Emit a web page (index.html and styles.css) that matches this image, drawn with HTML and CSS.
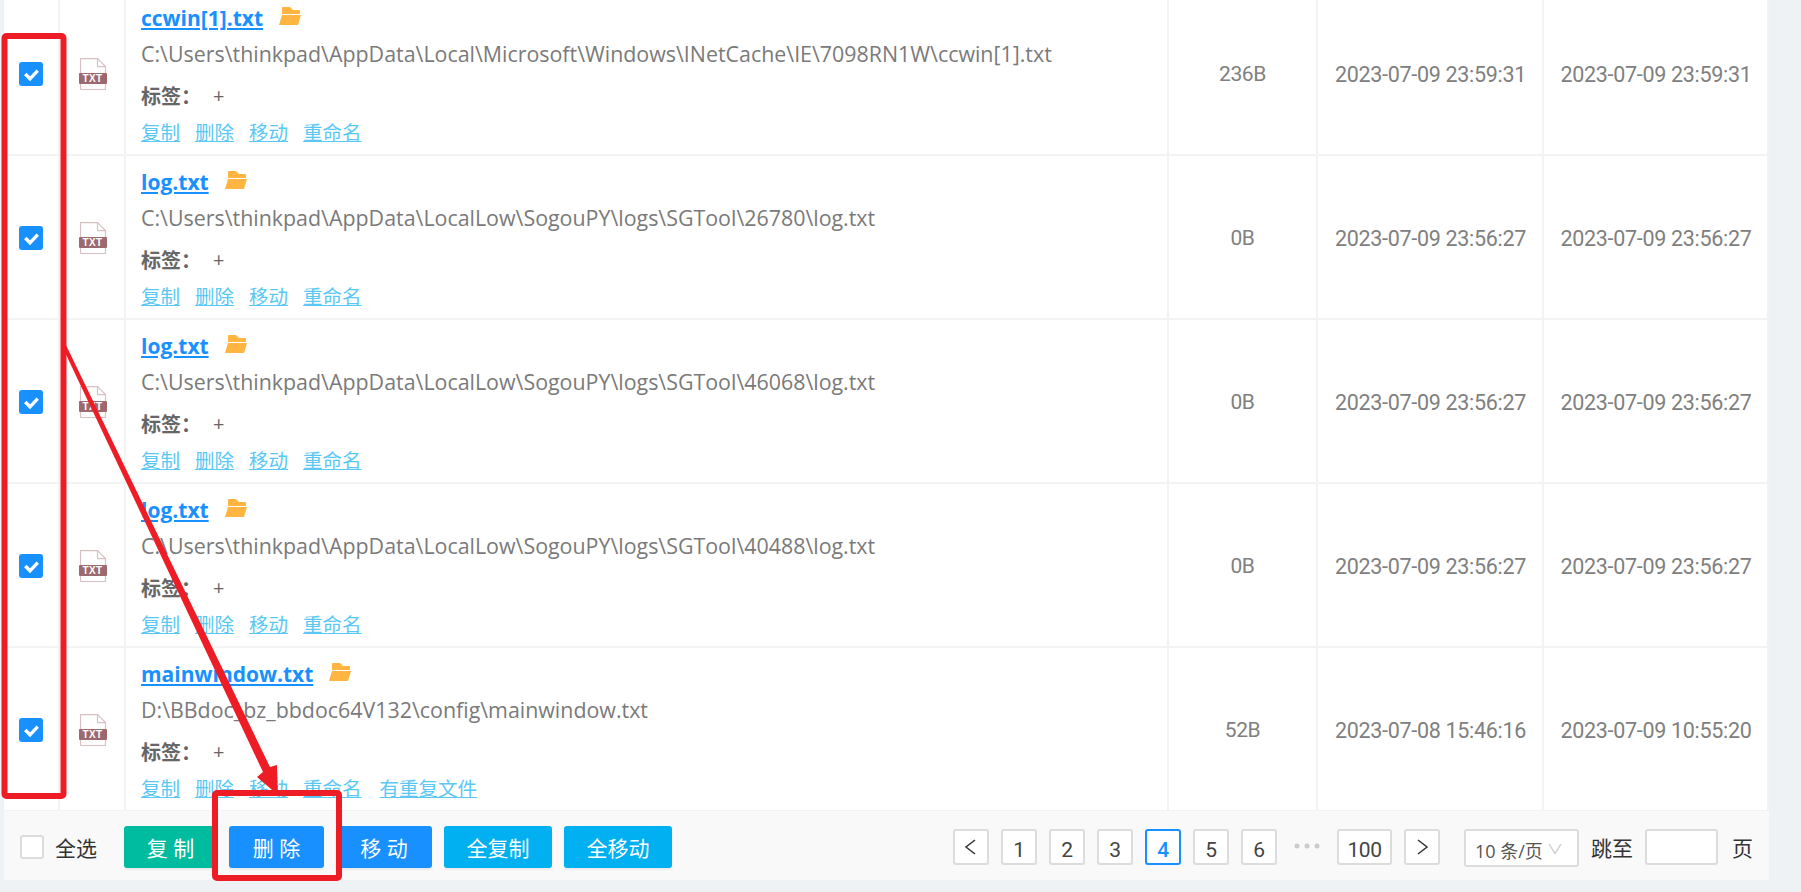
FILE: index.html
```html
<!DOCTYPE html>
<html lang="zh">
<head>
<meta charset="utf-8">
<title>文件列表</title>
<link rel="stylesheet" href="styles.css">
</head>
<body>
<svg width="0" height="0" class="defs">
  <symbol id="txt" viewBox="0 0 28 32">
    <path d="M1.500.6h17l8 8v22a1 1 0 0 1-1 1h-23a1 1 0 0 1-1-1z" fill="#fff" stroke="#d8bfc1" stroke-width="1.200"/>
    <path d="M18.500.6v8h8" fill="none" stroke="#d8bfc1" stroke-width="1.200"/>
    <rect x="0" y="15" width="28" height="11" rx="1" fill="#9c6a6e"/>
  </symbol>
  <symbol id="folder" viewBox="0 0 22 18">
    <path d="M3 1a1 1 0 0 1 1-1h7l3 3h6a1 1 0 0 1 1 1v3H3z" fill="#ffb53f"/>
    <path d="M3 8H22L19 18H0z" fill="#ffb53f"/>
  </symbol>
</svg>
<main class="panel">
  <div class="rows">
    <div class="row first">
      <div class="cell check"><span class="box on"><svg viewBox="0 0 24 24"><path d="M6.300 12L11 16.800l7.700-8.100"/></svg></span></div>
      <div class="cell icon"><span class="doc"><svg><use href="#txt"/></svg><b>TXT</b></span></div>
      <div class="cell main">
        <div class="title"><a href="#">ccwin[1].txt</a><svg class="folder"><use href="#folder"/></svg></div>
        <div class="path">C:\Users\thinkpad\AppData\Local\Microsoft\Windows\INetCache\IE\7098RN1W\ccwin[1].txt</div>
        <div class="tags"><strong>标签：</strong><span>+</span></div>
        <div class="links"><a href="#">复制</a><a href="#">删除</a><a href="#">移动</a><a href="#">重命名</a></div>
      </div>
      <div class="cell size">236B</div>
      <div class="cell date">2023-07-09 23:59:31</div>
      <div class="cell date">2023-07-09 23:59:31</div>
    </div>
    <div class="row">
      <div class="cell check"><span class="box on"><svg viewBox="0 0 24 24"><path d="M6.300 12L11 16.800l7.700-8.100"/></svg></span></div>
      <div class="cell icon"><span class="doc"><svg><use href="#txt"/></svg><b>TXT</b></span></div>
      <div class="cell main">
        <div class="title"><a href="#">log.txt</a><svg class="folder"><use href="#folder"/></svg></div>
        <div class="path">C:\Users\thinkpad\AppData\LocalLow\SogouPY\logs\SGTool\26780\log.txt</div>
        <div class="tags"><strong>标签：</strong><span>+</span></div>
        <div class="links"><a href="#">复制</a><a href="#">删除</a><a href="#">移动</a><a href="#">重命名</a></div>
      </div>
      <div class="cell size">0B</div>
      <div class="cell date">2023-07-09 23:56:27</div>
      <div class="cell date">2023-07-09 23:56:27</div>
    </div>
    <div class="row">
      <div class="cell check"><span class="box on"><svg viewBox="0 0 24 24"><path d="M6.300 12L11 16.800l7.700-8.100"/></svg></span></div>
      <div class="cell icon"><span class="doc"><svg><use href="#txt"/></svg><b>TXT</b></span></div>
      <div class="cell main">
        <div class="title"><a href="#">log.txt</a><svg class="folder"><use href="#folder"/></svg></div>
        <div class="path">C:\Users\thinkpad\AppData\LocalLow\SogouPY\logs\SGTool\46068\log.txt</div>
        <div class="tags"><strong>标签：</strong><span>+</span></div>
        <div class="links"><a href="#">复制</a><a href="#">删除</a><a href="#">移动</a><a href="#">重命名</a></div>
      </div>
      <div class="cell size">0B</div>
      <div class="cell date">2023-07-09 23:56:27</div>
      <div class="cell date">2023-07-09 23:56:27</div>
    </div>
    <div class="row">
      <div class="cell check"><span class="box on"><svg viewBox="0 0 24 24"><path d="M6.300 12L11 16.800l7.700-8.100"/></svg></span></div>
      <div class="cell icon"><span class="doc"><svg><use href="#txt"/></svg><b>TXT</b></span></div>
      <div class="cell main">
        <div class="title"><a href="#">log.txt</a><svg class="folder"><use href="#folder"/></svg></div>
        <div class="path">C:\Users\thinkpad\AppData\LocalLow\SogouPY\logs\SGTool\40488\log.txt</div>
        <div class="tags"><strong>标签：</strong><span>+</span></div>
        <div class="links"><a href="#">复制</a><a href="#">删除</a><a href="#">移动</a><a href="#">重命名</a></div>
      </div>
      <div class="cell size">0B</div>
      <div class="cell date">2023-07-09 23:56:27</div>
      <div class="cell date">2023-07-09 23:56:27</div>
    </div>
    <div class="row">
      <div class="cell check"><span class="box on"><svg viewBox="0 0 24 24"><path d="M6.300 12L11 16.800l7.700-8.100"/></svg></span></div>
      <div class="cell icon"><span class="doc"><svg><use href="#txt"/></svg><b>TXT</b></span></div>
      <div class="cell main">
        <div class="title"><a href="#">mainwindow.txt</a><svg class="folder"><use href="#folder"/></svg></div>
        <div class="path">D:\BBdoc_bz_bbdoc64V132\config\mainwindow.txt</div>
        <div class="tags"><strong>标签：</strong><span>+</span></div>
        <div class="links"><a href="#">复制</a><a href="#">删除</a><a href="#">移动</a><a href="#">重命名</a><a class="dup" href="#">有重复文件</a></div>
      </div>
      <div class="cell size">52B</div>
      <div class="cell date">2023-07-08 15:46:16</div>
      <div class="cell date">2023-07-09 10:55:20</div>
    </div>
  </div>
  <footer class="bar">
    <label class="all"><span class="box"></span>全选</label>
    <div class="actions">
      <button class="btn green">复 制</button>
      <button class="btn blue del">删 除</button>
      <button class="btn blue">移 动</button>
      <button class="btn cyan">全复制</button>
      <button class="btn cyan">全移动</button>
    </div>
    <nav class="pager">
      <span class="pg arrow"><svg viewBox="0 0 18 18"><path d="M13 2L4 9l9 7"/></svg></span>
      <span class="pg">1</span>
      <span class="pg">2</span>
      <span class="pg">3</span>
      <span class="pg now">4</span>
      <span class="pg">5</span>
      <span class="pg">6</span>
      <svg class="dots" viewBox="0 0 48 10"><circle cx="8" cy="5" r="2.500"/><circle cx="18" cy="5" r="2.500"/><circle cx="28" cy="5" r="2.500"/></svg>
      <span class="pg wide">100</span>
      <span class="pg arrow"><svg viewBox="0 0 18 18"><path d="M5 2l9 7-9 7"/></svg></span>
      <span class="size-sel">10 条/页<svg viewBox="0 0 14 12"><path d="M1 1l6 9.500L13 1"/></svg></span>
      <span class="jump">跳至</span>
      <span class="jump-in"></span>
      <span class="jump end">页</span>
    </nav>
  </footer>
</main>
<svg class="marks" viewBox="0 0 1801 892">
  <path class="head" d="M62 346L65 343L270 767L277 765L278 795L257 777L263 772Z"/>
  <rect x="4.500" y="36" width="59" height="760" rx="2"/>
  <rect x="215" y="793" width="124" height="85" rx="2"/>
</svg>
</body>
</html>
```
FILE: styles.css
```css
* { box-sizing: border-box; }
html, body { margin: 0; height: 100%; }
body {
  background: #eff2f5;
  overflow: hidden;
  position: relative;
  padding: 0 32px 12px 4px;
  font-family: "Open Sans", "Noto Sans CJK SC", sans-serif;
  font-size: 21px;
  color: #7a7a7a;
}
.defs { position: absolute; }
.panel { width: 1765px; height: 880px; display: flex; flex-direction: column; background: #fff; overflow: hidden; }
.rows { flex: 1; min-height: 0; display: flex; flex-direction: column; }
.row { height: 164px; flex: none; display: grid; grid-template-columns: 56px 66px 1043px 149px 226px 225px; border-bottom: 2px solid #f3f3f3; }
.first { margin-top: -8px; }
.cell { display: flex; align-items: center; justify-content: center; padding-top: 2px; border-right: 2px solid #f3f3f3; }
.main { display: block; padding: 8px 0 0 15px; }
.title { height: 36px; display: flex; align-items: center; }
.title a { color: #1890ff; font-weight: 700; font-size: 21px; line-height: 26px; text-decoration: underline; text-underline-offset: 2px; }
.folder { width: 22px; height: 18px; margin-left: 16px; margin-top: -4px; }
.path { height: 36px; line-height: 36px; white-space: nowrap; font-size: 21.4px; }
.tags { height: 46px; display: flex; align-items: center; color: #666; }
.tags strong { font-size: 20px; font-weight: 700; }
.tags span { margin-left: 12px; font-size: 20px; }
.links { height: 26px; display: flex; align-items: center; gap: 15px; }
.links a { color: #5ac8f5; text-decoration: underline; font-size: 19.500px; }
.links .dup { margin-left: 3px; }
.size, .date { font-family: Roboto, "Open Sans", sans-serif; color: #808080; }
.size { font-size: 21px; letter-spacing: -.4px; }
.date { font-size: 21.500px; letter-spacing: -.3px; padding-left: 1px; }
.box { width: 24px; height: 24px; border-radius: 3px; background: #fff; border: 2px solid #dcdcdc; display: block; flex: none; }
.box.on { background: #1890ff; border: 0; }
.box svg { display: block; width: 24px; height: 24px; fill: none; stroke: #fff; stroke-width: 3.400; }
.icon { padding-left: 1px; }
.doc { position: relative; width: 28px; height: 32px; display: block; }
.doc svg { width: 28px; height: 32px; display: block; }
.doc b { position: absolute; left: 0; top: 15px; width: 28px; height: 11px; font: 700 10px/11px "Liberation Sans", sans-serif; letter-spacing: .4px; color: #fff; text-align: center; }
.bar { height: 69px; flex: none; position: relative; background: #f9f9f9; display: flex; align-items: center; padding: 2px 16px 0 16px; color: #333; }
.all { display: flex; align-items: center; gap: 11px; width: 104px; }
.actions { display: flex; gap: 12px; }
.btn { width: 96px; height: 42px; border: 0; border-radius: 3px; color: #fff; font: 21px "Open Sans", "Noto Sans CJK SC", sans-serif; box-shadow: 0 2px 2px rgba(0,0,0,.06); padding: 0; }
.actions .green { width: 93px; }
.actions .del { width: 95px; }
.actions .cyan { width: 108px; }
.green { background: #00bc9f; }
.blue { background: #1890ff; }
.cyan { background: #00b0f0; }
.pager { margin-left: auto; margin-top: 1px; display: flex; align-items: center; }
.pg { width: 36px; height: 36px; margin-right: 12px; border: 2px solid #dcdcdc; border-radius: 3px; background: #fff; display: flex; align-items: center; justify-content: center; padding-top: 5px; font-family: Roboto, sans-serif; font-size: 21px; letter-spacing: -.5px; color: #444; }
.pg svg { width: 18px; height: 18px; margin-top: -5px; fill: none; stroke: #333; stroke-width: 1.500; }
.pg.now { border-color: #1890ff; color: #1890ff; font-weight: 500; }
.pg.wide { width: 55px; }
.dots { width: 48px; height: 10px; fill: #ccc; margin-bottom: 2px; }
.size-sel { width: 115px; height: 38px; margin-left: 12px; margin-top: 2px; border: 2px solid #dcdcdc; border-radius: 3px; background: #fff; display: flex; align-items: center; padding: 3px 0 0 9px; font-size: 18px; color: #555; white-space: nowrap; }
.size-sel svg { width: 14px; height: 12px; margin: -1px 0 0 5px; fill: none; stroke: #ccc; stroke-width: 1.400; }
.jump { margin-left: 12px; }
.jump-in { width: 73px; height: 36px; margin-left: 12px; border: 2px solid #dcdcdc; border-radius: 3px; background: #fff; }
.jump.end { margin-left: 14px; }
.marks { position: absolute; left: 0; top: 0; width: 1801px; height: 892px; pointer-events: none; }
.marks rect { fill: none; stroke: #ee1c25; stroke-width: 6; }
.marks .head { fill: #ee1c25; }
```
